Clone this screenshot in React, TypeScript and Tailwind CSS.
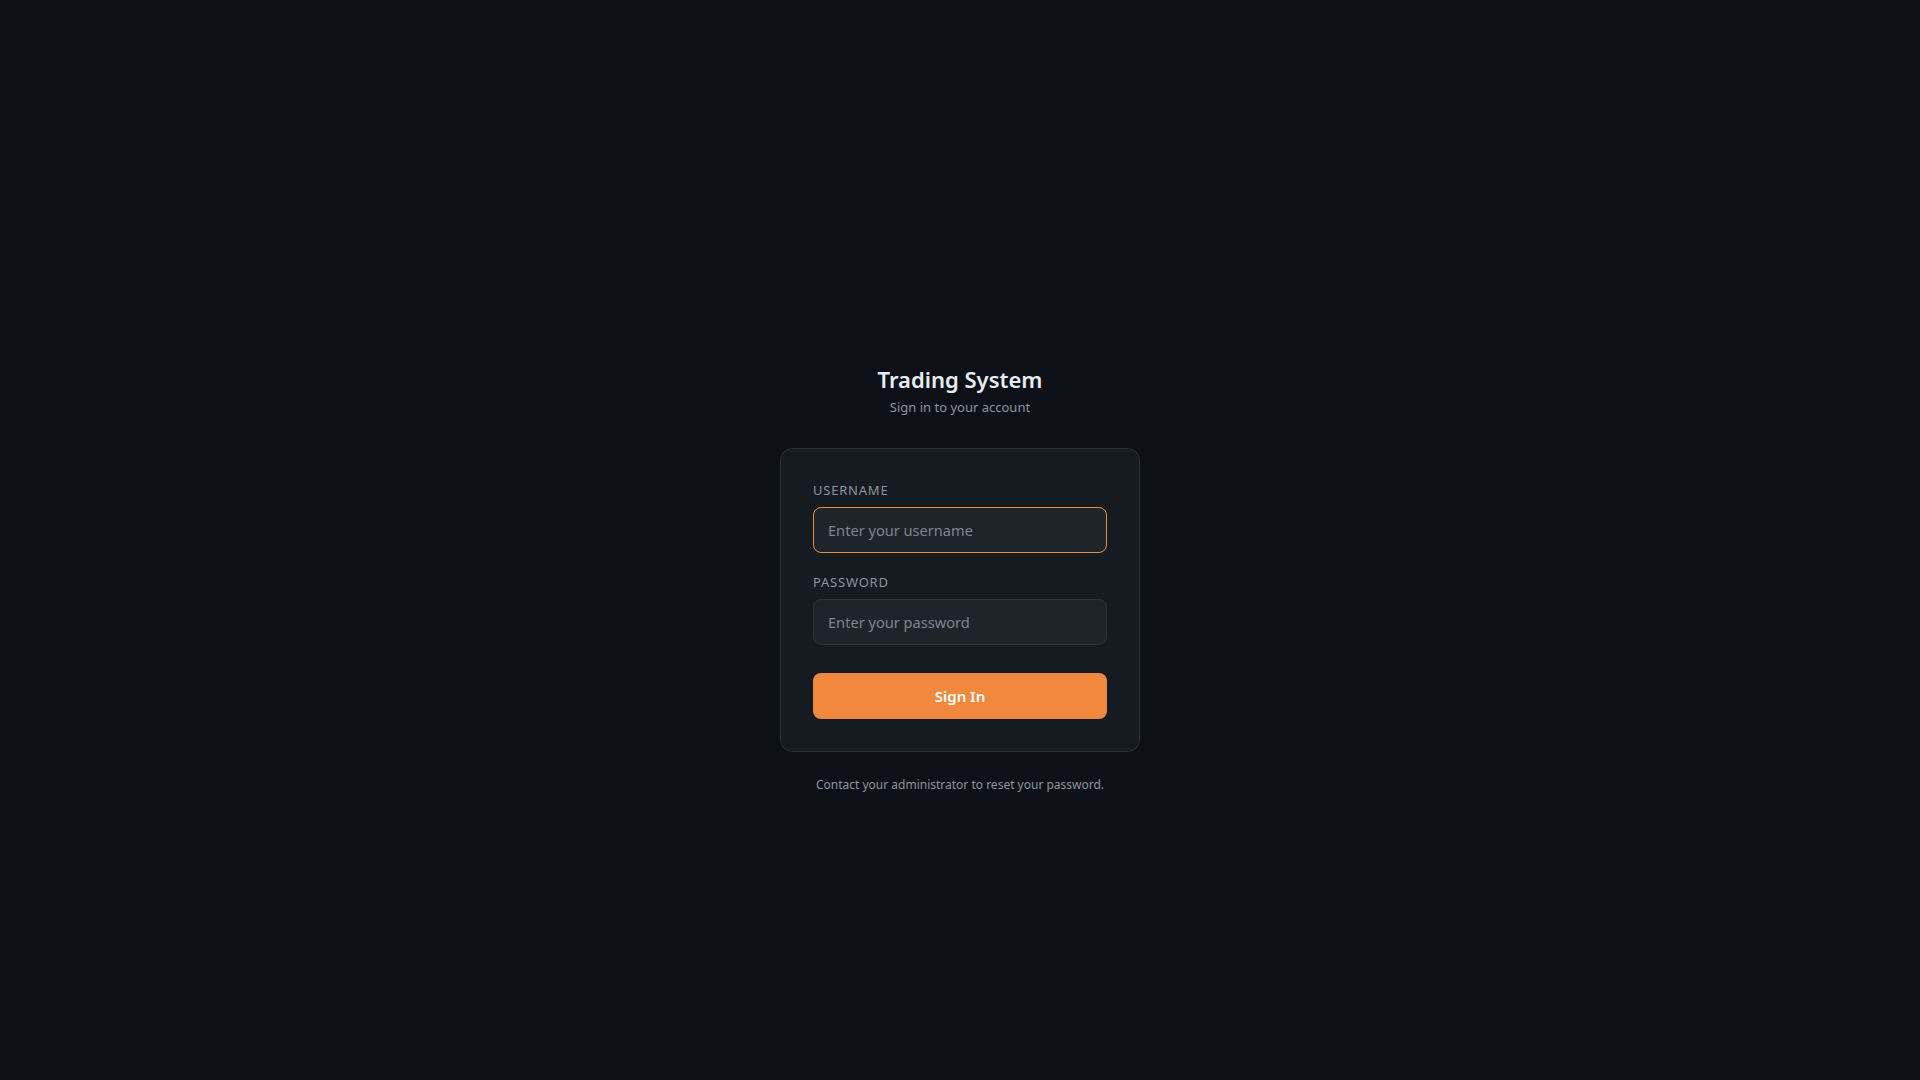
import React from "react";

export default function App() {
  return (
    <div
      className="min-h-screen w-full bg-[#0d1117] flex flex-col items-center pt-[363px]"
      style={{ fontFamily: '"Noto Sans", "Open Sans", sans-serif' }}
    >
      <h1 className="text-[22px] leading-8 font-semibold text-[#e6edf3]">Trading System</h1>
      <p className="text-[13px] leading-5 text-[#8b949e] mt-0.5">Sign in to your account</p>

      <div className="mt-[31px] w-[360px] rounded-xl border border-[#2a2f37] bg-[#161b22] p-8">
        <form className="flex flex-col" onSubmit={(e) => e.preventDefault()}>
          <label className="text-[13px] leading-[18px] tracking-[0.06em] text-[#8b949e] mb-2">USERNAME</label>
          <input
            type="text"
            placeholder="Enter your username"
            className="h-[46px] w-full rounded-lg border border-[#f0883e] bg-[#1f232a] px-3.5 text-[14.6px] text-[#e6edf3] placeholder:text-[#7d8590] outline-none"
          />
          <label className="mt-5 text-[13px] leading-[18px] tracking-[0.06em] text-[#8b949e] mb-2">PASSWORD</label>
          <input
            type="password"
            placeholder="Enter your password"
            className="h-[46px] w-full rounded-lg border border-[#2d323b] bg-[#1f232a] px-3.5 text-[14.6px] text-[#e6edf3] placeholder:text-[#7d8590] outline-none"
          />
          <button
            type="submit"
            className="mt-7 h-[46px] w-full rounded-lg bg-[#f0883e] text-[15px] font-semibold text-white"
          >
            Sign In
          </button>
        </form>
      </div>

      <p className="mt-[25px] text-xs leading-4 text-[#8b949e]">Contact your administrator to reset your password.</p>
    </div>
  );
}
